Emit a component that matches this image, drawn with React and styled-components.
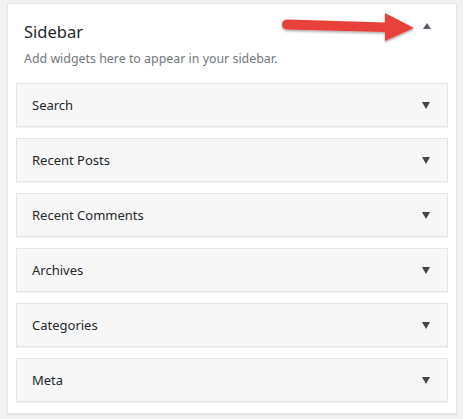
import styled, { createGlobalStyle } from "styled-components";

const GlobalStyle = createGlobalStyle`
  html, body {
    margin: 0;
    padding: 0;
    background: #f1f1f1;
  }
  body {
    font-family: "Noto Sans", "Open Sans", sans-serif;
    color: #23282d;
  }
`;

const widgets = ["Search", "Recent Posts", "Recent Comments", "Archives", "Categories", "Meta"];

function App() {
    return (
        <>
            <GlobalStyle />
            <Page>
                <Panel>
                    <Header>
                        <Title>Sidebar</Title>
                        <Toggle aria-label="Collapse" />
                        <Pointer width="140" height="36" viewBox="0 0 140 36">
                            <defs>
                                <filter id="shade" x="-10%" y="-30%" width="120%" height="160%">
                                    <feDropShadow dx="0" dy="1.5" stdDeviation="1.2" floodColor="#000" floodOpacity="0.35" />
                                </filter>
                            </defs>
                            <g filter="url(#shade)">
                                <path
                                    d="M6 9.5 Q1 10 1 14.5 Q1 19 6 19.5 L104 22 L104 31 L133 18 L104 3 L104 12.5 Z"
                                    fill="#e8403a"
                                />
                            </g>
                        </Pointer>
                    </Header>
                    <Description>Add widgets here to appear in your sidebar.</Description>
                    <List>
                        {widgets.map((name) => (
                            <Widget key={name}>
                                <WidgetTitle>{name}</WidgetTitle>
                                <Caret />
                            </Widget>
                        ))}
                    </List>
                </Panel>
            </Page>
        </>
    );
}

export default App;

const Page = styled.div`
    padding: 3px 6px 6px 7px;
`;

const Panel = styled.section`
    background: #fff;
    border: 1px solid #e5e5e5;
    box-shadow: 0 1px 1px rgba(0, 0, 0, 0.06);
    padding: 0 8px 11px 8px;
`;

const Header = styled.div`
    position: relative;
    display: flex;
    align-items: center;
    justify-content: space-between;
    height: 46px;
    padding: 0 17px 0 8px;
`;

const Title = styled.h2`
    margin: 0;
    padding-top: 8px;
    font-size: 16.5px;
    font-weight: 400;
    color: #23282d;
`;

const Toggle = styled.span`
    width: 0;
    height: 0;
    margin-top: -2px;
    border-left: 4px solid transparent;
    border-right: 4px solid transparent;
    border-bottom: 6px solid #555d66;
`;

const Pointer = styled.svg`
    position: absolute;
    left: 265px;
    top: 6px;
    overflow: visible;
`;

const Description = styled.p`
    margin: 0 0 16px 8px;
    font-size: 12.4px;
    color: #72777c;
`;

const List = styled.div`
    display: flex;
    flex-direction: column;
    gap: 11px;
`;

const Widget = styled.div`
    display: flex;
    align-items: center;
    justify-content: space-between;
    height: 42px;
    padding: 0 17px 0 15px;
    background: #f7f7f7;
    border: 1px solid #e5e5e5;
    box-shadow: 0 1px 1px rgba(0, 0, 0, 0.05);
`;

const WidgetTitle = styled.span`
    font-size: 13px;
    font-weight: 400;
    color: #23282d;
`;

const Caret = styled.span`
    width: 0;
    height: 0;
    border-left: 4.5px solid transparent;
    border-right: 4.5px solid transparent;
    border-top: 7px solid #444;
`;
